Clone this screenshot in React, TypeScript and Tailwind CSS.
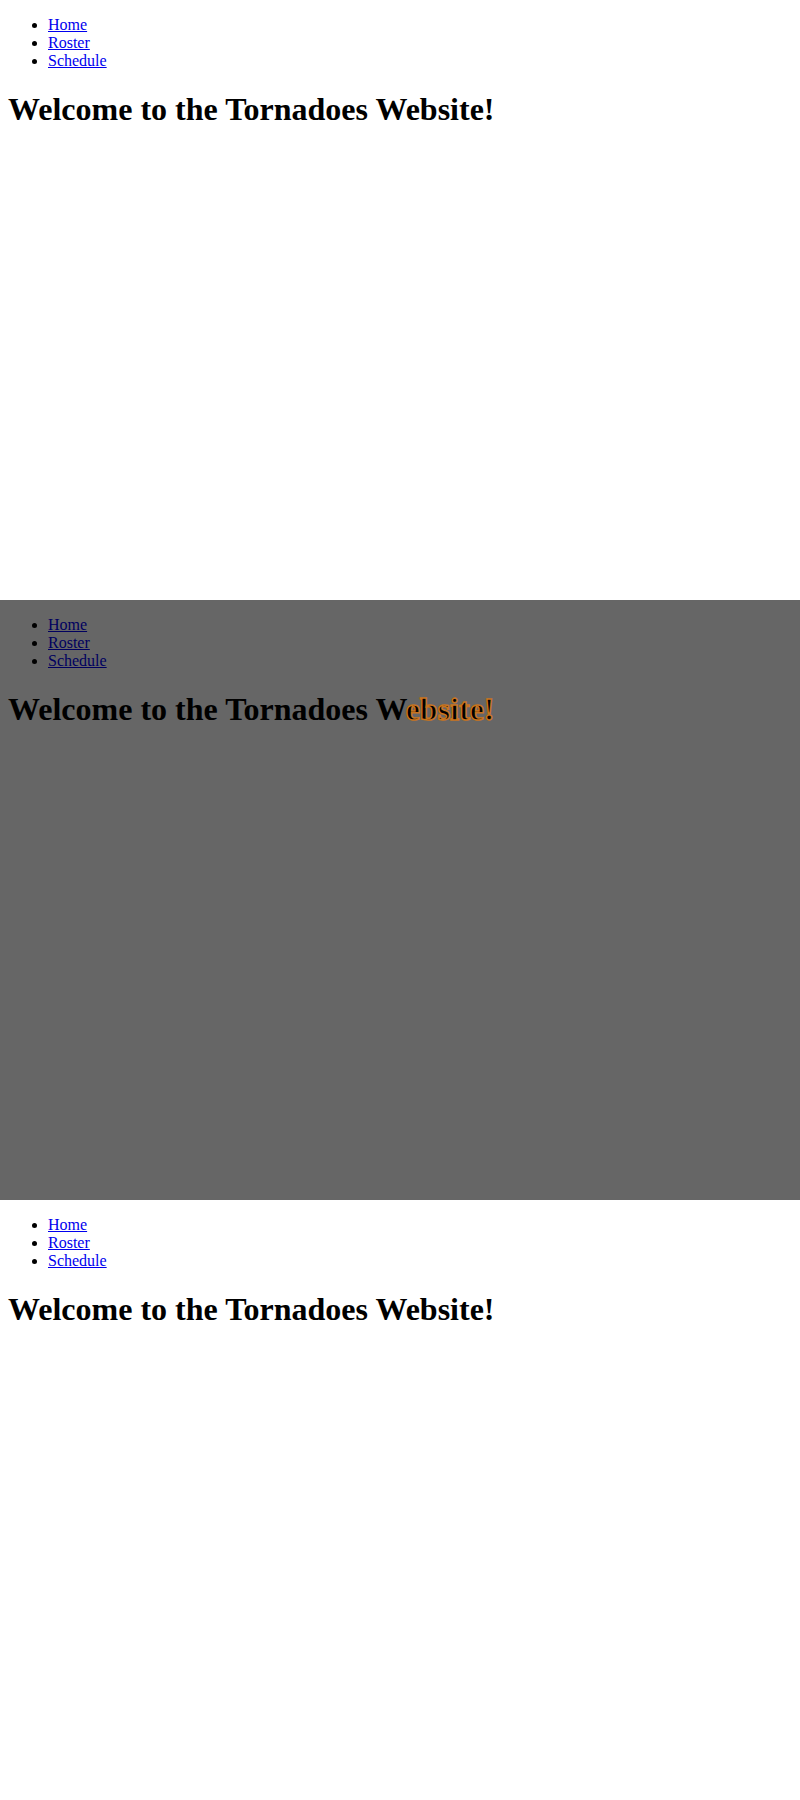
const links = ["Home", "Roster", "Schedule"]

function Panel({ dim }: { dim?: boolean }) {
  return (
    <div className={dim ? "h-[600px] bg-[#666666] px-2 pt-4" : "h-[600px] bg-white px-2 pt-4"}>
      <ul className="list-disc pl-10 text-base leading-[normal]">
        {links.map((l) => (
          <li key={l}>
            <a href="#" className={dim ? "text-[#00005f] underline" : "text-[#0000ee] underline"}>
              {l}
            </a>
          </li>
        ))}
      </ul>
      <h1 className="mt-[21.44px] text-[32px] font-bold leading-[normal] text-black">
        Welcome to the Tornadoes W
        {dim ? (
          <span className="[-webkit-text-stroke:1.5px_#c8741e]">ebsite!</span>
        ) : (
          "ebsite!"
        )}
      </h1>
    </div>
  )
}

export default function App() {
  return (
    <div className="font-['Liberation_Serif',serif] text-black">
      <Panel />
      <Panel dim />
      <Panel />
    </div>
  )
}
